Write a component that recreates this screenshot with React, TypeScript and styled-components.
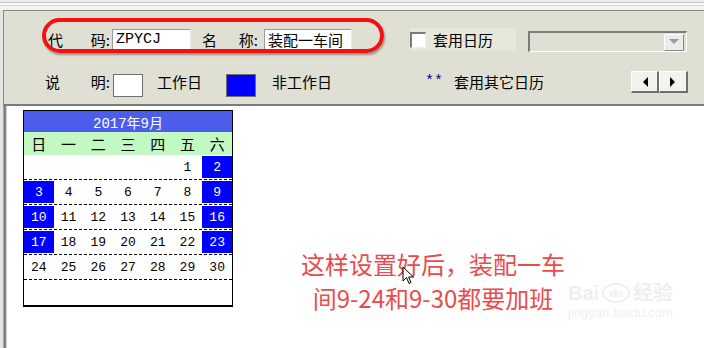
import React from 'react';
import styled, { createGlobalStyle } from 'styled-components';

const panelBg = '#dfe0d3';
const cjk = `"Noto Sans CJK SC", "Noto Sans", sans-serif`;
const mono = `"Liberation Mono", "Noto Sans CJK SC", monospace`;

const GlobalStyle = createGlobalStyle`
  html, body {
    margin: 0;
    padding: 0;
    background: #fff;
  }
  body {
    width: 704px;
    height: 348px;
    overflow: hidden;
    font-family: ${cjk};
  }
`;

const Screen = styled.div`
  position: relative;
  width: 704px;
  height: 348px;
  display: flex;
  flex-direction: column;
  overflow: hidden;
  background: #fff;
`;

const Chrome = styled.div`
  flex: none;
  height: 10px;
  background: linear-gradient(
    to bottom,
    #ececec 0 2px,
    #c4c4c4 2px 3px,
    #fbfbfb 3px 5px,
    #d4d4d4 5px 6px,
    #f3f3f3 6px 10px
  );
`;

const Body = styled.div`
  flex: 1;
  display: flex;
  min-height: 0;
`;

const Rail = styled.div`
  flex: none;
  width: 3px;
  background: #e4e4e4;
`;

const Main = styled.div`
  flex: 1;
  display: flex;
  flex-direction: column;
  min-width: 0;
`;

const Panel = styled.div`
  flex: none;
  box-sizing: border-box;
  height: 96px;
  padding-top: 17px;
  background: ${panelBg};
  border-top: 1px solid #8a8a8a;
  border-left: 1px solid #8a8a8a;
  border-bottom: 2px solid #7b7b7b;
  display: flex;
  flex-direction: column;
  gap: 20px;
`;

const Row = styled.div<{ $h: number; $center?: boolean }>`
  display: flex;
  align-items: ${p => (p.$center ? 'center' : 'flex-start')};
  height: ${p => p.$h}px;
`;

const Pair = styled.div<{ $w: number; $ml: number }>`
  display: flex;
  justify-content: space-between;
  width: ${p => p.$w}px;
  margin-left: ${p => p.$ml}px;
  font: 15px/22px ${cjk};
  color: #000;
`;

const Caption = styled.div<{ $w: number; $ml?: number; $color?: string; $font?: string }>`
  flex: none;
  width: ${p => p.$w}px;
  margin-left: ${p => p.$ml || 0}px;
  font: 15px/22px ${p => p.$font || cjk};
  color: ${p => p.$color || '#000'};
  white-space: nowrap;
`;

const Field = styled.div<{ $w: number; $ml: number; $mono?: boolean }>`
  box-sizing: border-box;
  width: ${p => p.$w}px;
  height: 22px;
  margin-left: ${p => p.$ml}px;
  padding-left: 3px;
  background: #fff;
  border-top: 1px solid #9a9a9a;
  border-left: 1px solid #9a9a9a;
  border-right: 1px solid #e8e8e8;
  border-bottom: 1px solid #e8e8e8;
  font: 15px/20px ${p => (p.$mono ? mono : cjk)};
  color: #000;
  white-space: nowrap;
  overflow: hidden;
`;

const CheckGroup = styled.div<{ $ml: number }>`
  box-sizing: border-box;
  width: 106px;
  height: 23px;
  margin-left: ${p => p.$ml}px;
  display: flex;
  align-items: center;
  background: #e6e8dc;
`;

const CheckBox = styled.div`
  box-sizing: border-box;
  width: 16px;
  height: 16px;
  background: #fff;
  border-top: 2px solid #7a7a7a;
  border-left: 2px solid #7a7a7a;
  border-right: 1px solid #eeeeee;
  border-bottom: 1px solid #eeeeee;
`;

const Combo = styled.div<{ $ml: number }>`
  box-sizing: border-box;
  width: 159px;
  height: 21px;
  margin-left: ${p => p.$ml}px;
  margin-top: 4px;
  display: flex;
  justify-content: flex-end;
  align-items: center;
  padding-right: 2px;
  background: ${panelBg};
  border-top: 2px solid #7c7c7c;
  border-left: 2px solid #7c7c7c;
  border-right: 1px solid #ffffff;
  border-bottom: 1px solid #ffffff;
`;

const ComboButton = styled.div`
  box-sizing: border-box;
  width: 20px;
  height: 17px;
  display: flex;
  align-items: center;
  justify-content: center;
  background: #ececea;
  border-top: 1px solid #ffffff;
  border-left: 1px solid #ffffff;
  border-right: 1px solid #8a8a8a;
  border-bottom: 1px solid #8a8a8a;
`;

const Swatch = styled.div<{ $fill: string; $ml: number }>`
  box-sizing: border-box;
  flex: none;
  width: 30px;
  height: 23px;
  margin-left: ${p => p.$ml}px;
  margin-top: 3px;
  background: ${p => p.$fill};
  border: 1px solid #707070;
`;

const NavGroup = styled.div`
  display: flex;
`;

const NavButton = styled.div<{ $w: number }>`
  box-sizing: border-box;
  width: ${p => p.$w}px;
  height: 22px;
  display: flex;
  align-items: center;
  justify-content: center;
  background: #f2f2f0;
  border-top: 1px solid #ffffff;
  border-left: 1px solid #ffffff;
  border-right: 2px solid #6f6f6f;
  border-bottom: 2px solid #6f6f6f;
`;

const Workspace = styled.div`
  flex: 1;
  display: flex;
  align-items: flex-start;
  background: #fff;
`;

const WorkBar = styled.div`
  flex: none;
  align-self: stretch;
  width: 4px;
  background: linear-gradient(to right, #a9a9a9 0 1px, #767676 1px 2px, #8c8c8c 2px 3px, #cfcfcf 3px 4px);
`;

const Calendar = styled.div`
  flex: none;
  box-sizing: border-box;
  width: 210px;
  height: 197px;
  margin-left: 16px;
  margin-top: 4px;
  border: 1px solid #000;
  border-bottom-width: 2px;
  background: #fff;
`;

const MonthBar = styled.div`
  height: 21px;
  display: flex;
  align-items: center;
  justify-content: center;
  background: #4b5dea;
  color: #fff;
  font: 14px ${mono};
`;

const WeekHead = styled.div`
  height: 23px;
  display: grid;
  grid-template-columns: repeat(7, 1fr);
  align-items: center;
  background: #c2f8c2;
  font: 15px ${cjk};
  color: #000;
  text-align: center;
`;

const WeekRow = styled.div<{ $dashed: boolean }>`
  box-sizing: border-box;
  height: 25px;
  display: grid;
  grid-template-columns: repeat(7, 1fr);
  align-items: start;
  background: ${p =>
    p.$dashed
      ? 'repeating-linear-gradient(to right, #000 0 3px, transparent 3px 5px) left bottom / 100% 1px no-repeat'
      : 'none'};
`;

const DayCell = styled.div<{ $off: boolean }>`
  height: 22px;
  margin-top: 1px;
  display: flex;
  align-items: center;
  justify-content: center;
  background: ${p => (p.$off ? '#0000ff' : 'transparent')};
  color: ${p => (p.$off ? '#fff' : '#000')};
  font: 13px ${mono};
`;

const Note = styled.div`
  flex: none;
  width: 266px;
  margin-left: 67px;
  margin-top: 141px;
  text-align: center;
  font: 24px/34px ${cjk};
  color: #eb4b4b;
`;

const Ring = styled.div`
  position: absolute;
  left: 42px;
  top: 18px;
  width: 342px;
  height: 35px;
  box-sizing: border-box;
  border: 4px solid #f21010;
  border-radius: 18px;
  box-shadow: 1px 2px 2px rgba(0, 0, 0, 0.35);
  pointer-events: none;
`;

const Cursor = styled.svg`
  position: absolute;
  left: 402px;
  top: 266px;
`;

const Watermark = styled.div`
  position: absolute;
  left: 568px;
  top: 281px;
  display: flex;
  flex-direction: column;
  color: #efefef;
  pointer-events: none;
`;

const MarkLine = styled.div`
  display: flex;
  align-items: center;
  gap: 3px;
  font: 700 20px/24px "Liberation Sans", ${cjk};
`;

const MarkBadge = styled.span`
  display: inline-flex;
  align-items: center;
  justify-content: center;
  width: 24px;
  height: 16px;
  border: 2px solid #efefef;
  border-radius: 50%;
  font-size: 11px;
  line-height: 1;
`;

const MarkUrl = styled.div`
  font: 13px/16px "Liberation Sans", sans-serif;
`;

const weeks: (number | null)[][] = [
  [null, null, null, null, null, 1, 2],
  [3, 4, 5, 6, 7, 8, 9],
  [10, 11, 12, 13, 14, 15, 16],
  [17, 18, 19, 20, 21, 22, 23],
  [24, 25, 26, 27, 28, 29, 30],
  [null, null, null, null, null, null, null],
];

// 24 and 30 are weekend days turned into work days
const workOverride = [24, 30];
const weekNames = ['日', '一', '二', '三', '四', '五', '六'];

const Tri = ({ dir, color }: { dir: 'left' | 'right' | 'down'; color: string }) => {
  const pts =
    dir === 'left' ? '6,0 6,10 1,5' : dir === 'right' ? '0,0 0,10 5,5' : '0,0 10,0 5,5';
  const w = dir === 'down' ? 10 : 6;
  const h = dir === 'down' ? 6 : 10;
  return (
    <svg width={w} height={h} viewBox={`0 0 ${w} ${h}`}>
      <polygon points={pts} fill={color} />
    </svg>
  );
};

export default function App() {
  return (
    <Screen>
      <GlobalStyle />
      <Chrome />
      <Body>
        <Rail />
        <Main>
          <Panel>
            <Row $h={23} $center>
              <Pair $w={62} $ml={44}>
                <span>代</span>
                <span>码:</span>
              </Pair>
              <Field $w={79} $ml={2} $mono>
                ZPYCJ
              </Field>
              <Pair $w={56} $ml={11}>
                <span>名</span>
                <span>称:</span>
              </Pair>
              <Field $w={88} $ml={6}>
                装配一车间
              </Field>
              <CheckGroup $ml={58}>
                <CheckBox />
                <Caption $w={80} $ml={7}>
                  套用日历
                </Caption>
              </CheckGroup>
              <Combo $ml={12}>
                <ComboButton>
                  <Tri dir="down" color="#9a9a9a" />
                </ComboButton>
              </Combo>
            </Row>
            <Row $h={26}>
              <Pair $w={65} $ml={41}>
                <span>说</span>
                <span>明:</span>
              </Pair>
              <Swatch $fill="#ffffff" $ml={3} />
              <Caption $w={69} $ml={14}>
                工作日
              </Caption>
              <Swatch $fill="#0000ff" $ml={0} />
              <Caption $w={153} $ml={16}>
                非工作日
              </Caption>
              <Caption $w={29} $color="#000080" $font={mono}>
                **
              </Caption>
              <Caption $w={177}>套用其它日历</Caption>
              <NavGroup>
                <NavButton $w={28}>
                  <Tri dir="left" color="#000" />
                </NavButton>
                <NavButton $w={29}>
                  <Tri dir="right" color="#000" />
                </NavButton>
              </NavGroup>
            </Row>
          </Panel>
          <Workspace>
            <WorkBar />
            <Calendar>
              <MonthBar>2017年9月</MonthBar>
              <WeekHead>
                {weekNames.map(n => (
                  <span key={n}>{n}</span>
                ))}
              </WeekHead>
              {weeks.map((week, wi) => (
                <WeekRow key={wi} $dashed={wi < weeks.length - 1}>
                  {week.map((d, di) => {
                    const off = d !== null && (di === 0 || di === 6) && !workOverride.includes(d);
                    return (
                      <DayCell key={di} $off={off}>
                        {d ?? ''}
                      </DayCell>
                    );
                  })}
                </WeekRow>
              ))}
            </Calendar>
            <Note>
              这样设置好后，装配一车
              <br />
              间9-24和9-30都要加班
            </Note>
          </Workspace>
        </Main>
      </Body>
      <Ring />
      <Watermark>
        <MarkLine>
          <span>Bai</span>
          <MarkBadge>du</MarkBadge>
          <span>经验</span>
        </MarkLine>
        <MarkUrl>jingyan.baidu.com</MarkUrl>
      </Watermark>
      <Cursor width="13" height="19" viewBox="0 0 13 19">
        <path
          d="M1 1 L1 15 L4.5 11.5 L7 17.5 L9 16.6 L6.6 11 L11.5 11 Z"
          fill="#fff"
          stroke="#000"
          strokeWidth="1"
          strokeLinejoin="round"
        />
      </Cursor>
    </Screen>
  );
}
